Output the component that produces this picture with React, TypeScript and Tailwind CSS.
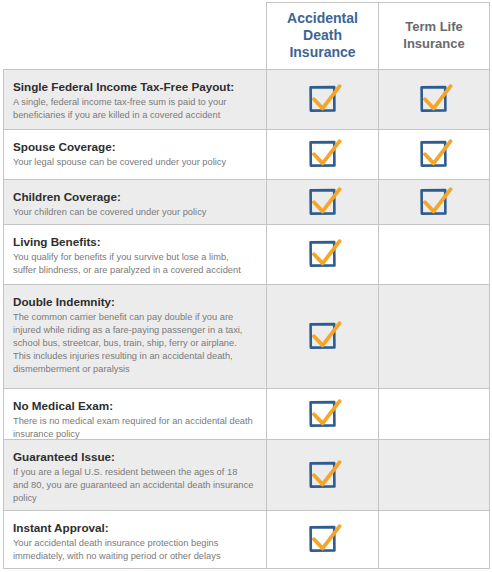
import React from 'react';

interface Feature {
  title: string;
  lines: string[];
  term: boolean;
  rowClass: string;
}

const features: Feature[] = [
  {
    title: 'Single Federal Income Tax-Free Payout:',
    lines: ['A single, federal income tax-free sum is paid to your', 'beneficiaries if you are killed in a covered accident'],
    term: true,
    rowClass: 'h-[60px] bg-[#ececec]',
  },
  {
    title: 'Spouse Coverage:',
    lines: ['Your legal spouse can be covered under your policy'],
    term: true,
    rowClass: 'h-[50px] bg-white',
  },
  {
    title: 'Children Coverage:',
    lines: ['Your children can be covered under your policy'],
    term: true,
    rowClass: 'h-[45px] bg-[#ececec]',
  },
  {
    title: 'Living Benefits:',
    lines: ['You qualify for benefits if you survive but lose a limb,', 'suffer blindness, or are paralyzed in a covered accident'],
    term: false,
    rowClass: 'h-[60px] bg-white',
  },
  {
    title: 'Double Indemnity:',
    lines: [
      'The common carrier benefit can pay double if you are',
      'injured while riding as a fare-paying passenger in a taxi,',
      'school bus, streetcar, bus, train, ship, ferry or airplane.',
      'This includes injuries resulting in an accidental death,',
      'dismemberment or paralysis',
    ],
    term: false,
    rowClass: 'h-[104px] bg-[#ececec]',
  },
  {
    title: 'No Medical Exam:',
    lines: ['There is no medical exam required for an accidental death', 'insurance policy'],
    term: false,
    rowClass: 'h-[51px] bg-white',
  },
  {
    title: 'Guaranteed Issue:',
    lines: [
      'If you are a legal U.S. resident between the ages of 18',
      'and 80, you are guaranteed an accidental death insurance',
      'policy',
    ],
    term: false,
    rowClass: 'h-[71px] bg-[#ececec]',
  },
  {
    title: 'Instant Approval:',
    lines: ['Your accidental death insurance protection begins', 'immediately, with no waiting period or other delays'],
    term: false,
    rowClass: 'h-[58px] bg-white',
  },
];

const CheckMark: React.FC = () => (
  <svg width="34" height="28" viewBox="0 0 34 28" className="ml-[6px] mb-[3px]" fill="none">
    {/* hand-drawn looking box */}
    <path
      d="M1.6 3.4 L25.2 3.1 L25.4 26.4 L1.8 26.6 Z"
      stroke="#2e5c8e"
      strokeWidth="2.6"
      strokeLinejoin="round"
    />
    <path
      d="M5 15.2 L13.6 24.4 L30.6 2.2"
      stroke="#f5a62a"
      strokeWidth="3.8"
      strokeLinecap="round"
      strokeLinejoin="round"
    />
  </svg>
);

export default function App() {
  return (
    <div className="min-h-[572px] w-[492px] bg-white pl-[3px] pt-[2px] font-['Liberation_Sans',Arial,sans-serif]">
      <div className="w-[487px]">
        <div className="flex h-[68px]">
          <div className="w-[263px] border-b border-[#c4c4c4]" />
          <div className="flex w-[112px] items-center justify-center border-l border-t border-b border-[#c4c4c4] pb-[2px] text-center text-[14px] font-bold leading-[17px] text-[#3b6597]">
            Accidental
            <br />
            Death
            <br />
            Insurance
          </div>
          <div className="flex flex-1 items-center justify-center border border-[#c4c4c4] pb-[2px] text-center text-[13px] font-bold leading-[17px] text-[#6a6a6a]">
            Term Life
            <br />
            Insurance
          </div>
        </div>

        {features.map((f) => (
          <div key={f.title} className={`flex border-x border-b border-[#c4c4c4] ${f.rowClass}`}>
            <div className="w-[262px] px-[9px] pt-[9px]">
              <div className="text-[11.7px] font-bold leading-[15px] whitespace-nowrap text-[#2e2e2e]">{f.title}</div>
              <div className="mt-[2px] text-[9.3px] leading-[13px] whitespace-nowrap text-[#7a7a7a]">
                {f.lines.map((line) => (
                  <div key={line}>{line}</div>
                ))}
              </div>
            </div>
            <div className="flex w-[112px] items-center justify-center border-l border-[#c4c4c4]">
              <CheckMark />
            </div>
            <div className="flex flex-1 items-center justify-center border-l border-[#c4c4c4]">
              {f.term && <CheckMark />}
            </div>
          </div>
        ))}
      </div>
    </div>
  );
}
